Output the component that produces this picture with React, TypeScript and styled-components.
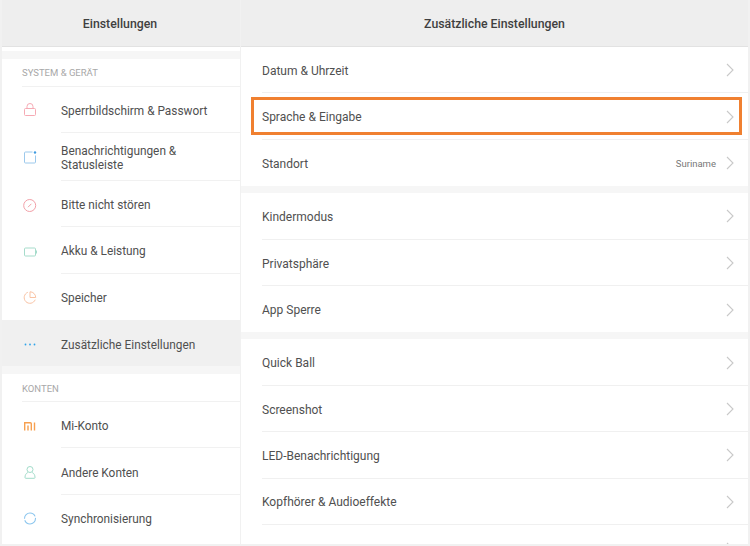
import React from "react";
import styled, { createGlobalStyle } from "styled-components";

const GlobalStyle = createGlobalStyle`
  html, body {
    margin: 0;
    padding: 0;
    background: #f1f1f1;
    font-family: Roboto, "Liberation Sans", sans-serif;
  }
`;

const Page = styled.div`
  width: 750px;
  height: 546px;
  overflow: hidden;
  display: grid;
  grid-template-columns: 238px 507px;
  column-gap: 1px;
  padding: 0 2px;
  box-sizing: border-box;
  background: #f1f1f1;
`;

const Column = styled.div`
  display: flex;
  flex-direction: column;
  height: 544px;
  overflow: hidden;
  background: #fff;
`;

const Header = styled.div<{ $side?: boolean }>`
  flex: none;
  height: 47px;
  box-sizing: border-box;
  padding: 1px ${(p) => (p.$side ? 2 : 0)}px 0 0;
  display: flex;
  align-items: center;
  justify-content: center;
  background: #eeeeee;
  border-bottom: 1px solid #e2e2e2;
  font-size: 12.3px;
  font-weight: 500;
  color: #3f3f3f;
`;

const Gap = styled.div<{ $h: number }>`
  flex: none;
  height: ${(p) => p.$h}px;
  background: #f6f6f6;
`;

const Spacer = styled.div`
  flex: none;
  height: 4px;
  background: #fff;
`;

const SectionLabel = styled.div`
  flex: none;
  height: 27.5px;
  margin-left: 20px;
  box-sizing: border-box;
  padding-top: 1px;
  display: flex;
  align-items: center;
  border-bottom: 1px solid #f1f1f1;
  font-size: 9.5px;
  color: #a8a8a8;
`;

const SideRow = styled.div<{ $active?: boolean; $tall?: boolean }>`
  flex: none;
  height: ${(p) => (p.$tall ? 48 : 46.4)}px;
  display: flex;
  align-items: stretch;
  background: ${(p) => (p.$active ? "#f0f0f0" : "#fff")};
`;

const IconCell = styled.div`
  flex: none;
  width: 59px;
  display: flex;
  align-items: center;
  padding: 1px 0 0 19px;
  box-sizing: border-box;
`;

const SideText = styled.div<{ $last?: boolean }>`
  flex: 1;
  display: flex;
  align-items: center;
  box-sizing: border-box;
  padding-top: 3px;
  font-size: 11.85px;
  line-height: 14px;
  color: #505050;
  border-bottom: ${(p) => (p.$last ? "none" : "1px solid #f1f1f1")};
`;

const MainRow = styled.div<{ $last?: boolean }>`
  position: relative;
  flex: none;
  height: 46.4px;
  margin-left: 21px;
  padding: 1px 14px 0 0;
  box-sizing: border-box;
  display: flex;
  align-items: center;
  font-size: 12px;
  color: #505050;
  border-bottom: ${(p) => (p.$last ? "none" : "1px solid #f0f0f0")};
`;

const RowTitle = styled.span`
  flex: 1;
  padding-top: 1.5px;
`;

const RowValue = styled.span`
  font-size: 9.5px;
  color: #777;
  margin-right: 10px;
`;

const Highlight = styled.div`
  position: absolute;
  left: -11px;
  right: 6px;
  top: 4px;
  bottom: 4px;
  border: 3px solid #f08030;
  pointer-events: none;
`;

const Chevron = () => (
  <svg width="8" height="14" viewBox="0 0 8 14" fill="none">
    <path d="M1 1l6 6-6 6" stroke="#c9c9c9" strokeWidth="1.1" />
  </svg>
);

const Glyph = ({ children }: { children: React.ReactNode }) => (
  <svg width="16" height="16" viewBox="0 0 16 16" fill="none" strokeWidth="1">
    {children}
  </svg>
);

const icons: Record<string, React.ReactNode> = {
  lock: (
    <Glyph>
      <rect x="3.500" y="6.500" width="11" height="7" rx="1" stroke="#f6aab4" />
      <path d="M6 6.500V4.500a3 3 0 0 1 6 0v2" stroke="#f6aab4" />
    </Glyph>
  ),
  notice: (
    <Glyph>
      <path d="M11.500 3H4.500a1 1 0 0 0-1 1v9a1 1 0 0 0 1 1h9a1 1 0 0 0 1-1V6.500" stroke="#9cc9ec" />
      <circle cx="14" cy="3.500" r="1.200" fill="#3f9be0" />
    </Glyph>
  ),
  dnd: (
    <Glyph>
      <circle cx="8.700" cy="8.500" r="6" stroke="#f2a0a8" />
      <path d="M7 10.200l3.400-3.400" stroke="#f2a0a8" />
    </Glyph>
  ),
  battery: (
    <Glyph>
      <rect x="3.500" y="5" width="11" height="8" rx="1" stroke="#a6dccb" />
      <rect x="15" y="7.500" width="1" height="3" fill="#a6dccb" />
    </Glyph>
  ),
  storage: (
    <Glyph>
      <path d="M6.800 3.300a5.700 5.700 0 1 0 7.400 7.400" stroke="#f9c3a4" />
      <path d="M9 2.800a5.700 5.700 0 0 1 5.700 5.700H9z" stroke="#f9c3a4" />
    </Glyph>
  ),
  more: (
    <Glyph>
      <circle cx="4.500" cy="8.500" r="0.900" fill="#2fa3ea" />
      <circle cx="9" cy="8.500" r="0.900" fill="#2fa3ea" />
      <circle cx="13.500" cy="8.500" r="0.900" fill="#2fa3ea" />
    </Glyph>
  ),
  mi: (
    <Glyph>
      <path d="M3.700 12.500V4.700h5.600a1 1 0 0 1 1 1v6.800M7 7.500v5" stroke="#f7a04f" strokeWidth="1.400" />
      <path d="M13.500 4.500v8" stroke="#f7a04f" strokeWidth="1.400" />
    </Glyph>
  ),
  user: (
    <Glyph>
      <circle cx="9" cy="5.500" r="3" stroke="#a2dcca" />
      <path d="M6.800 8.500C5 9.400 4 11 4 13.500a.8.800 0 0 0 .8.800h8.400a.8.800 0 0 0 .8-.800c0-2.500-1-4.100-2.800-5" stroke="#a2dcca" />
    </Glyph>
  ),
  sync: (
    <Glyph>
      <circle cx="9" cy="8.500" r="5.500" stroke="#8cc6ee" strokeDasharray="15 1.500" strokeWidth="1.100" />
    </Glyph>
  ),
};

type SideItem = { label: React.ReactNode; icon: string; active?: boolean; tall?: boolean; last?: boolean };

const SideItems = ({ items }: { items: SideItem[] }) => (
  <>
    {items.map((it) => (
      <SideRow key={it.icon} $active={it.active} $tall={it.tall}>
        <IconCell>{icons[it.icon]}</IconCell>
        <SideText $last={it.last}>
          <span>{it.label}</span>
        </SideText>
      </SideRow>
    ))}
  </>
);

type MainItem = { label: string; value?: string; highlight?: boolean; last?: boolean };

const MainItems = ({ items }: { items: MainItem[] }) => (
  <>
    {items.map((it) => (
      <MainRow key={it.label || "empty"} $last={it.last}>
        <RowTitle>{it.label}</RowTitle>
        {it.value && <RowValue>{it.value}</RowValue>}
        <Chevron />
        {it.highlight && <Highlight />}
      </MainRow>
    ))}
  </>
);

export default function App() {
  return (
    <>
      <GlobalStyle />
      <Page>
        <Column>
          <Header $side>Einstellungen</Header>
          <Spacer />
          <Gap $h={8} />
          <SectionLabel>SYSTEM &amp; GERÄT</SectionLabel>
          <SideItems
            items={[
              { label: "Sperrbildschirm & Passwort", icon: "lock" },
              {
                label: (
                  <>
                    Benachrichtigungen &amp;
                    <br />
                    Statusleiste
                  </>
                ),
                icon: "notice",
                tall: true,
              },
              { label: "Bitte nicht stören", icon: "dnd" },
              { label: "Akku & Leistung", icon: "battery" },
              { label: "Speicher", icon: "storage", last: true },
              { label: "Zusätzliche Einstellungen", icon: "more", active: true, last: true },
            ]}
          />
          <Gap $h={8} />
          <SectionLabel>KONTEN</SectionLabel>
          <SideItems
            items={[
              { label: "Mi-Konto", icon: "mi" },
              { label: "Andere Konten", icon: "user" },
              { label: "Synchronisierung", icon: "sync", last: true },
            ]}
          />
        </Column>
        <Column>
          <Header>Zusätzliche Einstellungen</Header>
          <MainItems
            items={[
              { label: "Datum & Uhrzeit" },
              { label: "Sprache & Eingabe", highlight: true },
              { label: "Standort", value: "Suriname", last: true },
            ]}
          />
          <Gap $h={7} />
          <MainItems
            items={[
              { label: "Kindermodus" },
              { label: "Privatsphäre" },
              { label: "App Sperre", last: true },
            ]}
          />
          <Gap $h={7} />
          <MainItems
            items={[
              { label: "Quick Ball" },
              { label: "Screenshot" },
              { label: "LED-Benachrichtigung" },
              { label: "Kopfhörer & Audioeffekte" },
              { label: "", last: true },
            ]}
          />
        </Column>
      </Page>
    </>
  );
}
